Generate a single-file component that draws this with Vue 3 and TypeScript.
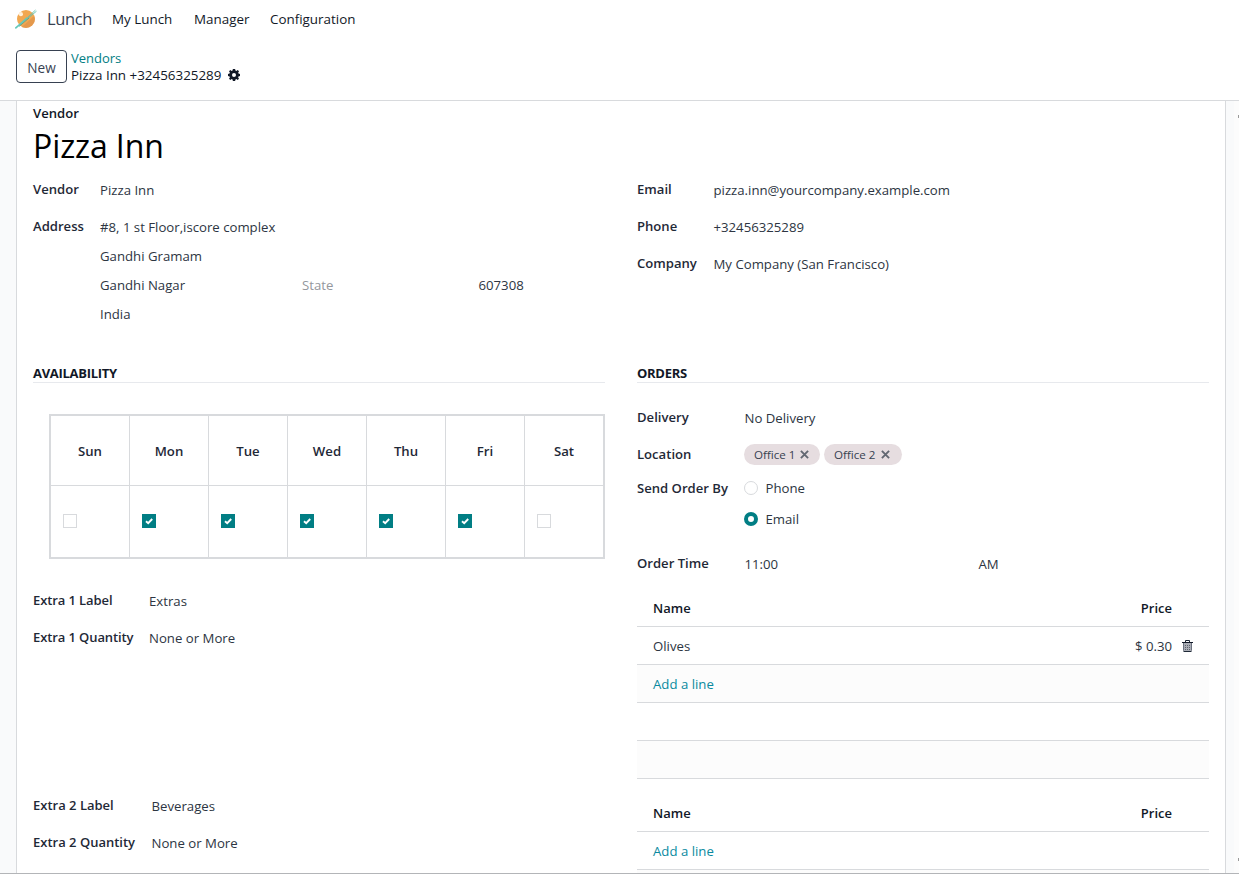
<script setup lang="ts">
const menus: { label: string; cls: string }[] = [
  { label: 'My Lunch', cls: 'm1' },
  { label: 'Manager', cls: 'm2' },
  { label: 'Configuration', cls: 'm3' },
]

const contacts = [
  { label: 'Email', value: 'pizza.inn@yourcompany.example.com' },
  { label: 'Phone', value: '+32456325289' },
  { label: 'Company', value: 'My Company (San Francisco)' },
]

const days = [
  { name: 'Sun', open: false },
  { name: 'Mon', open: true },
  { name: 'Tue', open: true },
  { name: 'Wed', open: true },
  { name: 'Thu', open: true },
  { name: 'Fri', open: true },
  { name: 'Sat', open: false },
]

const locations = ['Office 1', 'Office 2']

const extras = [
  { index: 1, label: 'Extras', quantity: 'None or More', lines: [{ name: 'Olives', price: '$ 0.30' }], blanks: 2 },
  { index: 2, label: 'Beverages', quantity: 'None or More', lines: [], blanks: 1 },
]
</script>

<template>
  <div class="page">
    <nav class="navbar">
      <svg class="logo" width="23" height="20" viewBox="0 0 23 20">
        <circle cx="11" cy="10" r="9" fill="#f2a851" />
        <path d="M19.600 8a9 9 0 0 1-12.800 10L18.500 7.500z" fill="#d98c49" opacity=".55" />
        <circle cx="5.900" cy="5.200" r="2.100" fill="#fff1db" />
        <path d="M.3 19.300 12.500 8.600" stroke="#62c9bb" stroke-width="1.600" />
        <path d="M12.500 8.600 20.500 1M13 9.200 21.500 2.200" stroke="#62bfae" stroke-width=".9" />
        <path d="M4 17.500 14 9" stroke="#3f9c93" stroke-width=".7" />
      </svg>
      <span class="app-name">Lunch</span>
      <a v-for="m in menus" :key="m.label" class="menu" :class="m.cls">{{ m.label }}</a>
    </nav>

    <header class="control">
      <button class="new-btn">New</button>
      <div class="crumbs">
        <a class="crumb-link">Vendors</a>
        <div class="crumb-current">
          <span>Pizza Inn +32456325289</span>
          <svg class="gear" width="12" height="12" viewBox="0 0 12 12">
            <path
              fill="#111827"
              fill-rule="evenodd"
              d="M4.900 0h2.200l.35 1.500.9.380L9.700 1.050l1.300 1.300-.85 1.300.38.900L12 4.900v2.200l-1.500.35-.38.900.85 1.300-1.300 1.300-1.300-.85-.9.380L7.100 12H4.900l-.35-1.500-.9-.38-1.300.85-1.300-1.300.85-1.300-.38-.9L0 7.100V4.900l1.500-.35.38-.9-.85-1.300 1.300-1.300 1.300.85.900-.38zM6 4a2 2 0 1 0 0 4 2 2 0 0 0 0-4z"
            />
          </svg>
        </div>
      </div>
    </header>

    <main class="content">
      <section class="sheet">
        <div class="title-label">Vendor</div>
        <h1 class="title">Pizza Inn</h1>

        <div class="columns info">
          <div class="fields address-fields">
            <div class="label">Vendor</div>
            <div class="value">Pizza Inn</div>
            <div class="label">Address</div>
            <div class="address">
              <div class="line wide">#8, 1 st Floor,iscore complex</div>
              <div class="line wide">Gandhi Gramam</div>
              <div class="line">Gandhi Nagar</div>
              <div class="line placeholder">State</div>
              <div class="line">607308</div>
              <div class="line wide">India</div>
            </div>
          </div>
          <div class="fields contact-fields">
            <template v-for="c in contacts" :key="c.label">
              <div class="label">{{ c.label }}</div>
              <div class="value">{{ c.value }}</div>
            </template>
          </div>
        </div>

        <div class="columns middle">
          <div>
            <h2 class="section">AVAILABILITY</h2>
            <div class="week">
              <div v-for="d in days" :key="d.name" class="day">
                <div class="day-name">{{ d.name }}</div>
                <div class="day-check">
                  <span class="box" :class="{ on: d.open }">
                    <svg v-if="d.open" width="14" height="14" viewBox="0 0 14 14">
                      <path d="M4 7.200 6.200 9.200 10.200 5" fill="none" stroke="#fff" stroke-width="1.900" />
                    </svg>
                  </span>
                </div>
              </div>
            </div>
          </div>
          <div>
            <h2 class="section">ORDERS</h2>
            <div class="fields order-fields">
              <div class="label">Delivery</div>
              <div class="value">No Delivery</div>
              <div class="label">Location</div>
              <div class="tags">
                <span v-for="l in locations" :key="l" class="tag">
                  <span>{{ l }}</span>
                  <svg width="9" height="9" viewBox="0 0 9 9">
                    <path d="M.9.900 8.100 8.100M8.100.900.900 8.100" stroke="#636872" stroke-width="1.900" />
                  </svg>
                </span>
              </div>
              <div class="label">Send Order By</div>
              <div class="radio"><i class="dot"></i><span>Phone</span></div>
              <div></div>
              <div class="radio"><i class="dot on"></i><span>Email</span></div>
              <div class="label">Order Time</div>
              <div class="value time"><span>11:00</span><span>AM</span></div>
            </div>
          </div>
        </div>

        <div v-for="e in extras" :key="e.index" class="columns extra">
          <div class="fields extra-fields" :class="'set' + e.index">
            <div class="label">Extra {{ e.index }} Label</div>
            <div class="value">{{ e.label }}</div>
            <div class="label">Extra {{ e.index }} Quantity</div>
            <div class="value">{{ e.quantity }}</div>
          </div>
          <div class="list">
            <div class="row head"><span>Name</span><span class="price">Price</span></div>
            <div v-for="l in e.lines" :key="l.name" class="row">
              <span>{{ l.name }}</span>
              <span class="price">{{ l.price }}</span>
              <svg class="trash" width="11" height="12" viewBox="0 0 11 12">
                <path d="M3.500 2V.5h4V2" fill="none" stroke="#1f2937" stroke-width="1" />
                <path d="M1 3h9v8H1z" fill="#a9acb4" />
                <path d="M0 2.500h11" stroke="#111827" stroke-width="1" />
                <path d="M1.500 3v7.500M9.500 3v7.500" stroke="#6b7280" stroke-width="1" />
                <path d="M1.500 11.500h8" stroke="#1f2937" stroke-width="1" />
                <path d="M3.500 5v5M5.500 5v5M7.500 5v5" stroke="#5b616c" stroke-width="1" stroke-dasharray="1 1" />
              </svg>
            </div>
            <div class="row"><a>Add a line</a></div>
            <div v-for="b in e.blanks" :key="b" class="row"></div>
          </div>
        </div>
      </section>
      <aside class="gutter"><i class="tick"></i><i class="tick"></i></aside>
    </main>
  </div>
</template>

<style>
body {
  background: #fff;
  overflow: hidden;
}
</style>

<style scoped>
* {
  box-sizing: border-box;
}
.page {
  width: 1239px;
  height: 874px;
  display: flex;
  flex-direction: column;
  font-family: 'Open Sans', 'Noto Sans', sans-serif;
  font-size: 13.200px;
  line-height: 18px;
  color: #2d3542;
  white-space: nowrap;
  overflow: hidden;
  border-bottom: 1px solid #b3b5b8;
}
.navbar {
  height: 40px;
  flex: none;
  display: flex;
  align-items: center;
  padding: 0 0 2px 15px;
  color: #111827;
}
.logo {
  margin-right: 9px;
}
.app-name {
  width: 65px;
  font-size: 16.5px;
  letter-spacing: -0.4px;
  color: #374151;
}
.m1 {
  width: 82px;
}
.m2 {
  width: 76px;
}
.menu {
  font-size: 13.400px;
}
.control {
  height: 61px;
  flex: none;
  display: flex;
  padding: 10px 16px 0;
  border-bottom: 1px solid #d8dadd;
}
.new-btn {
  width: 51px;
  height: 33px;
  padding: 1px 0 0;
  border: 1px solid #374151;
  border-radius: 4px;
  background: #fff;
  font: 500 13.600px 'Open Sans', sans-serif;
  color: #374151;
}
.crumbs {
  margin-left: 4px;
  line-height: 17px;
  font-size: 13.400px;
}
.crumb-link {
  display: block;
  color: #017e84;
  font-size: 13px;
  font-weight: 500;
}
.crumb-current {
  display: flex;
  align-items: center;
  color: #111827;
}
.gear {
  margin: -1px 0 0 7px;
}
.content {
  flex: 1;
  min-height: 0;
  display: flex;
  padding-left: 16px;
  background: #f9fafb;
}
.sheet {
  width: 1210px;
  flex: none;
  overflow: hidden;
  padding: 0 16px;
  background: #fff;
  border: solid #d8dadd;
  border-width: 0 1px;
}
.gutter {
  width: 5px;
  margin-left: auto;
  padding: 14px 0 12px;
  display: flex;
  flex-direction: column;
  justify-content: space-between;
  align-items: flex-end;
  background: #fcfcfc;
}
.tick {
  width: 1px;
  height: 3px;
  background: #9a9a9a;
}
.title-label {
  height: 24px;
  line-height: 24px;
  font-size: 13.100px;
  font-weight: 600;
  color: #111827;
}
.title {
  height: 46px;
  margin: 0;
  line-height: 41px;
  font-size: 32px;
  letter-spacing: -0.1px;
  font-weight: 400;
  color: #000;
}
.columns {
  display: grid;
  grid-template-columns: 572px 572px;
  column-gap: 32px;
}
.info {
  height: 189px;
}
.middle {
  height: 222px;
}
.fields {
  display: grid;
  grid-auto-rows: 37px;
  align-content: start;
}
.label {
  height: 37px;
  line-height: 37px;
  font-size: 13.100px;
  font-weight: 600;
  color: #1f2937;
}
.extra-fields .label {
  font-size: 13px;
}
.set1 .label {
  letter-spacing: -0.1px;
}
.value {
  height: 37px;
  line-height: 39px;
}
.address-fields {
  grid-template-columns: 67px 1fr;
}
.contact-fields {
  grid-template-columns: 76.500px 1fr;
}
.address {
  display: grid;
  grid-template-columns: 202px 176.500px auto;
  grid-auto-rows: 29px;
  padding-top: 5px;
}
.line {
  line-height: 29px;
}
.wide {
  grid-column: 1 / -1;
}
.placeholder {
  color: #94979d;
}
.section {
  margin: 0;
  height: 23px;
  line-height: 27px;
  font-size: 13px;
  letter-spacing: -0.3px;
  font-weight: 700;
  color: #111827;
  border-bottom: 1px solid #e7e9ed;
}
.week {
  display: grid;
  grid-template-columns: 78px repeat(6, 79px);
  width: 556px;
  height: 145px;
  margin: 31px 0 0 16px;
  border: 2px solid #d8dadd;
}
.day + .day {
  border-left: 1px solid #d8dadd;
}
.day-name {
  height: 70px;
  line-height: 70px;
  text-align: center;
  font-weight: 600;
  color: #1f2937;
  border-bottom: 1px solid #d8dadd;
}
.day-check {
  height: 70px;
  display: flex;
  align-items: center;
  padding-left: 12px;
}
.box {
  width: 14px;
  height: 14px;
  border: 1px solid #d8dadd;
}
.box.on {
  border: 0;
  background: #017e84;
}
.box svg {
  display: block;
}
.order-fields {
  grid-template-columns: 107px 1fr;
  grid-template-rows: 37px 37px 31px 31px 37px;
  margin-top: 16px;
}
.order-fields > :nth-child(5) {
  height: 31px;
  line-height: 31px;
}
.order-fields > :nth-child(n + 9) {
  margin-top: 10px;
}
.order-fields .value {
  padding-left: 0.5px;
}
.tags {
  display: flex;
  gap: 4px;
  align-items: center;
}
.tag {
  display: flex;
  align-items: center;
  justify-content: space-between;
  height: 21px;
  width: 76px;
  padding: 0 11px 0 10px;
  border-radius: 11px;
  background: #e6dde0;
  font-size: 11.600px;
  font-weight: 500;
  color: #374151;
}
.tag:last-child {
  width: 78px;
  padding-right: 12px;
}
.tag svg {
  margin-top: -1px;
}
.radio {
  display: flex;
  align-items: center;
  gap: 7.500px;
  height: 30px;
}
.dot {
  width: 14px;
  height: 14px;
  border-radius: 50%;
  border: 1px solid #d8dadd;
}
.dot.on {
  border: 4px solid #017e84;
}
.time {
  display: grid;
  grid-template-columns: 234px auto;
}
.extra {
  height: 205px;
}
.set1 {
  grid-template-columns: 116px 1fr;
}
.set2 {
  grid-template-columns: 118.500px 1fr;
}
.list {
  margin-top: 7px;
}
.row {
  height: 38px;
  display: flex;
  align-items: center;
  padding: 1px 16px 0;
  border-bottom: 1px solid #d8dadd;
}
.row:nth-child(odd):not(.head) {
  background: #fcfcfc;
}
.head {
  font-size: 13px;
  font-weight: 600;
  color: #111827;
}
.price {
  margin-left: auto;
}
.head .price {
  margin-right: 21px;
}
.trash {
  margin: 0 0 0 10px;
}
.row a {
  color: #0a8a9f;
}
</style>
